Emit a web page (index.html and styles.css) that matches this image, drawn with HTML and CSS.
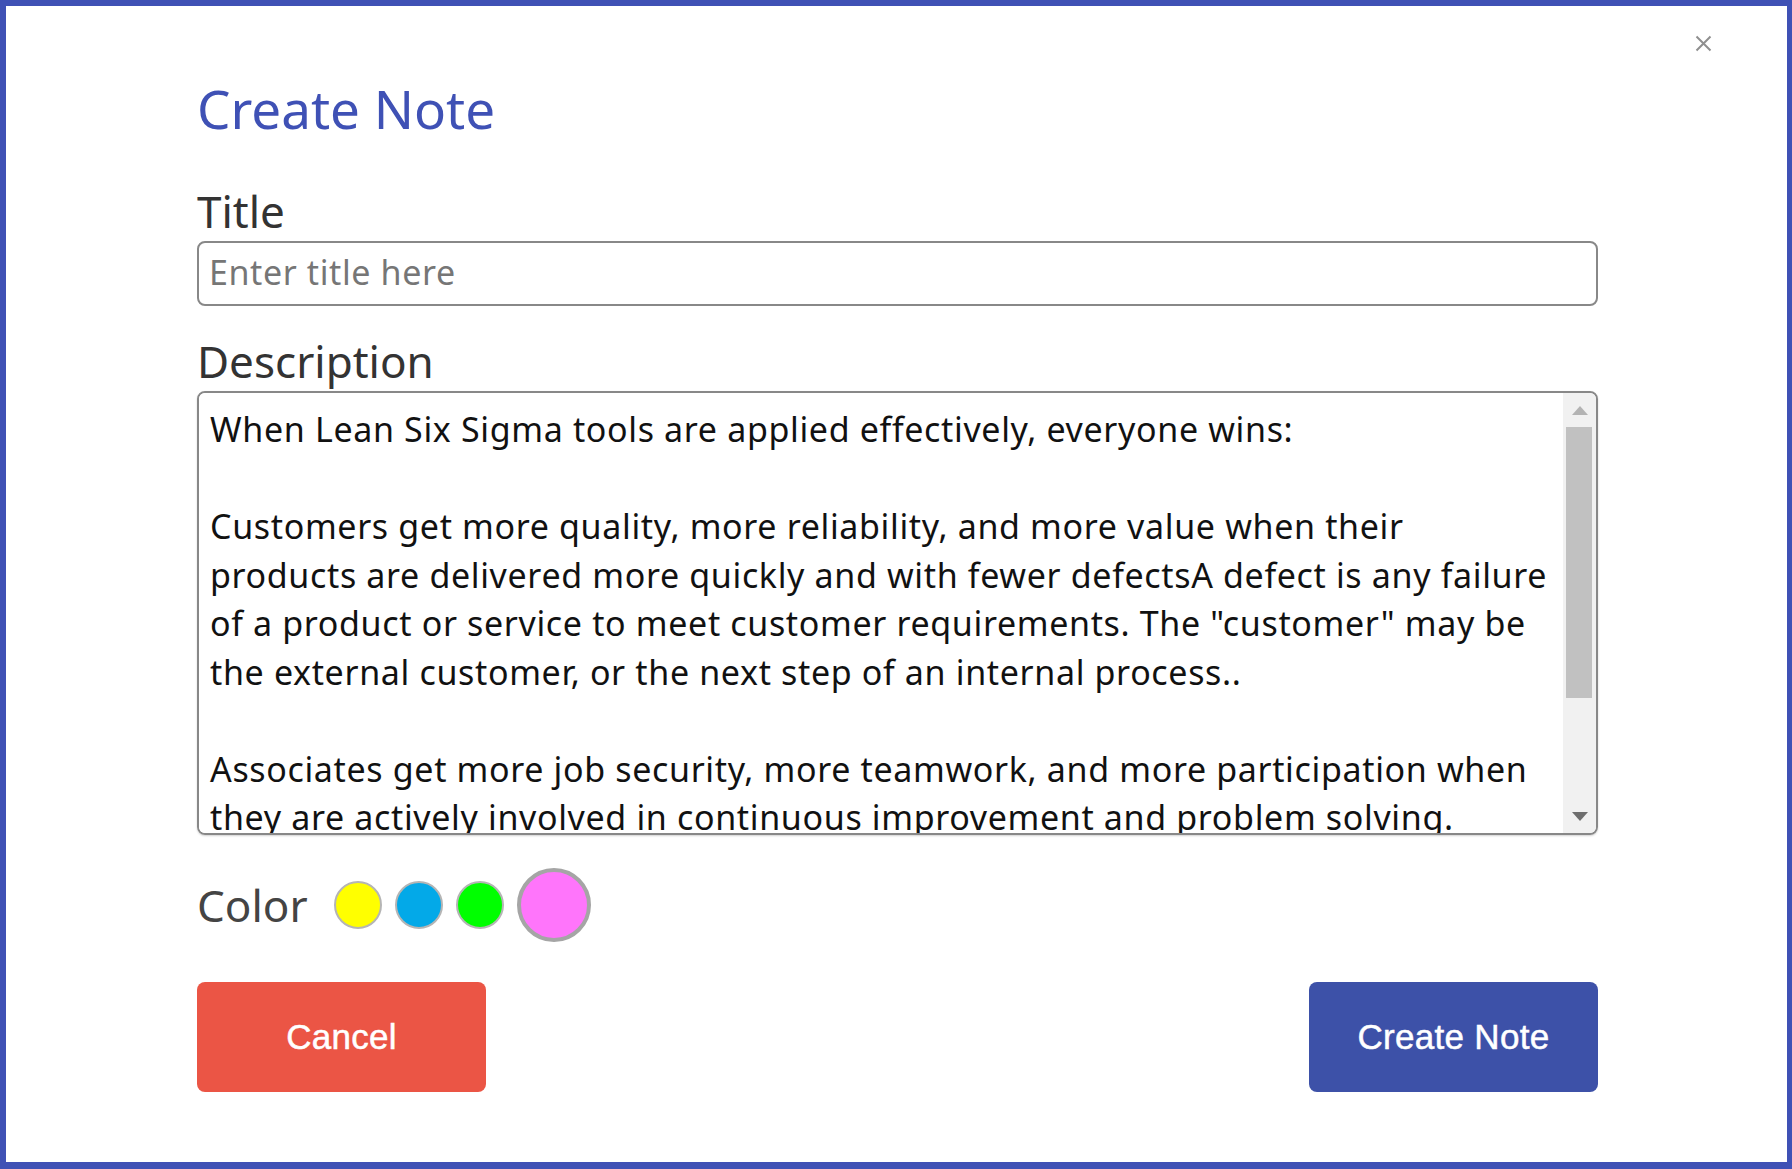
FILE: index.html
```html
<!DOCTYPE html>
<html lang="en">
<head>
<meta charset="utf-8">
<title>Create Note</title>
<link rel="stylesheet" href="styles.css">
</head>
<body>
<div class="modal">
  <div class="topbar">
    <button class="close" type="button" aria-label="Close">
      <svg width="17" height="17" viewBox="0 0 17 17"><path d="M1.5 1.5 L15.5 15.5 M15.5 1.5 L1.5 15.5" stroke="#8f8f8f" stroke-width="2" fill="none"/></svg>
    </button>
  </div>
  <div class="content">
    <h1 class="heading">Create Note</h1>
    <label class="label" for="title">Title</label>
    <input id="title" class="input" type="text" placeholder="Enter title here">
    <label class="label" for="desc">Description</label>
    <div class="textbox">
      <textarea id="desc" class="textarea" wrap="off">When Lean Six Sigma tools are applied effectively, everyone wins:

Customers get more quality, more reliability, and more value when their
products are delivered more quickly and with fewer defectsA defect is any failure
of a product or service to meet customer requirements. The "customer" may be
the external customer, or the next step of an internal process..

Associates get more job security, more teamwork, and more participation when
they are actively involved in continuous improvement and problem solving.</textarea>
      <div class="scrollbar">
        <div class="sb-btn"><svg width="16" height="9" viewBox="0 0 16 9"><path d="M8 0 L16 9 L0 9 Z" fill="#b3b3b3"/></svg></div>
        <div class="sb-track"><div class="sb-thumb"></div></div>
        <div class="sb-btn"><svg width="16" height="9" viewBox="0 0 16 9"><path d="M0 0 L16 0 L8 9 Z" fill="#6e6e6e"/></svg></div>
      </div>
    </div>
    <div class="color-row">
      <span class="label color-label">Color</span>
      <span class="swatch swatch-yellow"></span>
      <span class="swatch swatch-blue"></span>
      <span class="swatch swatch-green"></span>
      <span class="swatch swatch-pink selected"></span>
    </div>
    <div class="actions">
      <button class="btn btn-cancel" type="button">Cancel</button>
      <button class="btn btn-primary" type="button">Create Note</button>
    </div>
  </div>
</div>
</body>
</html>
```

FILE: styles.css
```css
* { box-sizing: border-box; }

html, body {
  margin: 0;
  padding: 0;
  height: 100%;
  background: #ffffff;
}

body {
  font-family: "Noto Sans", "Open Sans", sans-serif;
}

.modal {
  height: 100vh;
  border-style: solid;
  border-color: #3f51b5;
  border-width: 6px 5px 7px 6px;
  background: #ffffff;
  display: flex;
  flex-direction: column;
}

.topbar {
  display: flex;
  justify-content: flex-end;
  padding: 29px 75px 0 0;
}

.close {
  width: 17px;
  height: 17px;
  padding: 0;
  border: none;
  background: none;
  display: block;
  cursor: pointer;
}

.close svg { display: block; }

.content {
  padding: 0 189px 0 191px;
  display: flex;
  flex-direction: column;
}

.heading {
  margin: 21px 0 0;
  font-size: 53px;
  line-height: 72px;
  font-weight: 400;
  color: #3f51b5;
}

.label {
  display: block;
  font-size: 44px;
  line-height: 60px;
  color: #333333;
  margin-top: 36px;
}

.label[for="desc"] { margin-top: 25px; }

.input {
  height: 65px;
  width: 100%;
  border: 2px solid #888888;
  border-radius: 8px;
  padding: 0 10px 4px;
  font-family: "Noto Sans", "Open Sans", sans-serif;
  font-size: 34px;
  letter-spacing: 0.6px;
  color: #111111;
  outline: none;
}

.input::placeholder { color: #767676; }

.textbox {
  height: 444px;
  border: 2px solid #888888;
  border-radius: 8px;
  overflow: hidden;
  display: flex;
  box-shadow: 0 1px 2px rgba(0,0,0,0.18);
}

.textarea {
  flex: 1;
  min-width: 0;
  border: none;
  outline: none;
  resize: none;
  overflow: hidden;
  white-space: pre;
  padding: 12px 11px 10px;
  font-family: "Noto Sans", "Open Sans", sans-serif;
  font-size: 34px;
  letter-spacing: 0.65px;
  line-height: 48.5px;
  color: #111111;
  background: #ffffff;
}

.scrollbar {
  width: 33px;
  background: #f1f1f1;
  display: flex;
  flex-direction: column;
}

.sb-btn {
  height: 34px;
  display: flex;
  align-items: center;
  justify-content: center;
}

.sb-btn svg { display: block; }

.sb-track {
  flex: 1;
  padding: 0 4px 0 3px;
}

.sb-thumb {
  height: 271px;
  background: #c1c1c1;
}

.color-row {
  margin-top: 33px;
  height: 74px;
  display: flex;
  align-items: center;
}

.color-label {
  margin: 0 26px 0 0;
  color: #444444;
}

.swatch {
  width: 48px;
  height: 48px;
  border-radius: 50%;
  border: 2px solid #b5b5b5;
  margin-right: 13px;
  flex: none;
}

.swatch-yellow { background: #ffff00; }
.swatch-blue { background: #03a9e8; }
.swatch-green { background: #00ff00; }
.swatch-pink { background: #ff75fb; }

.swatch.selected {
  width: 74px;
  height: 74px;
  border: 4px solid #a5a5a5;
}

.actions {
  margin-top: 40px;
  display: flex;
  justify-content: space-between;
}

.btn {
  width: 289px;
  height: 110px;
  border: none;
  border-radius: 8px;
  font-family: "Liberation Sans", Arial, sans-serif;
  font-size: 35px;
  letter-spacing: 0.3px;
  -webkit-text-stroke: 0.5px #ffffff;
  color: #ffffff;
  cursor: pointer;
}

.btn-cancel { background: #eb5545; }
.btn-primary { background: #3d51a8; }
```
